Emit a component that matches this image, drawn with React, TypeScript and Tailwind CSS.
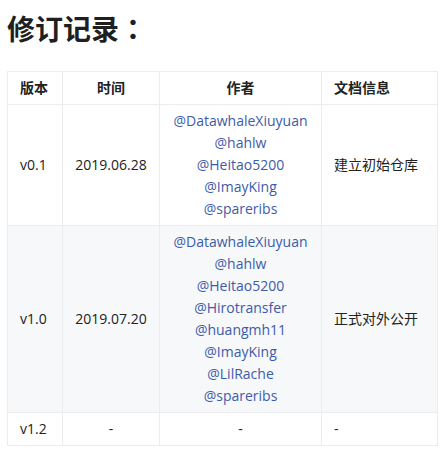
const rows = [
  {
    version: 'v0.1',
    date: '2019.06.28',
    authors: ['@DatawhaleXiuyuan', '@hahlw', '@Heitao5200', '@ImayKing', '@spareribs'],
    info: '建立初始仓库',
  },
  {
    version: 'v1.0',
    date: '2019.07.20',
    authors: [
      '@DatawhaleXiuyuan',
      '@hahlw',
      '@Heitao5200',
      '@Hirotransfer',
      '@huangmh11',
      '@ImayKing',
      '@LilRache',
      '@spareribs',
    ],
    info: '正式对外公开',
  },
  { version: 'v1.2', date: '-', authors: ['-'], info: '-' },
];

export default function App() {
  return (
    <div
      className="w-[441px] h-[451px] bg-white text-[#222] overflow-hidden"
      style={{ fontFamily: '"Open Sans", "Noto Sans CJK SC", sans-serif' }}
    >
      <h1 className="pl-[7px] pt-[8px] text-[28px] leading-[40px] font-bold text-[#1f1f1f]">
        修订记录<span className="font-['Noto_Sans_CJK_TC',sans-serif]">：</span>
      </h1>
      <table className="mt-[22px] ml-[7px] w-[430px] border-collapse text-[14px] leading-[22px] table-fixed">
        <colgroup>
          <col className="w-[55px]" />
          <col className="w-[97px]" />
          <col className="w-[162px]" />
          <col className="w-[116px]" />
        </colgroup>
        <thead>
          <tr className="h-[33px]">
            <th className="border border-[#ececec] px-[12px] text-left font-bold">版本</th>
            <th className="border border-[#ececec] px-[12px] text-center font-bold">时间</th>
            <th className="border border-[#ececec] px-[12px] text-center font-bold">作者</th>
            <th className="border border-[#ececec] px-[12px] text-left font-bold">文档信息</th>
          </tr>
        </thead>
        <tbody>
          {rows.map((r, i) => (
            <tr key={r.version} className={i % 2 === 1 ? 'bg-[#f6f8fa]' : 'bg-white'}>
              <td className="border border-[#ececec] px-[12px] py-[5px] text-left">{r.version}</td>
              <td className="border border-[#ececec] px-[12px] py-[5px] text-center">{r.date}</td>
              <td className="border border-[#ececec] px-[12px] py-[5px] text-center">
                {r.authors.map((a) =>
                  a === '-' ? (
                    <div key={a}>-</div>
                  ) : (
                    <div key={a} className="text-[#3d5ba9]">
                      {a}
                    </div>
                  )
                )}
              </td>
              <td className="border border-[#ececec] px-[12px] py-[5px] text-left">{r.info}</td>
            </tr>
          ))}
        </tbody>
      </table>
    </div>
  );
}
